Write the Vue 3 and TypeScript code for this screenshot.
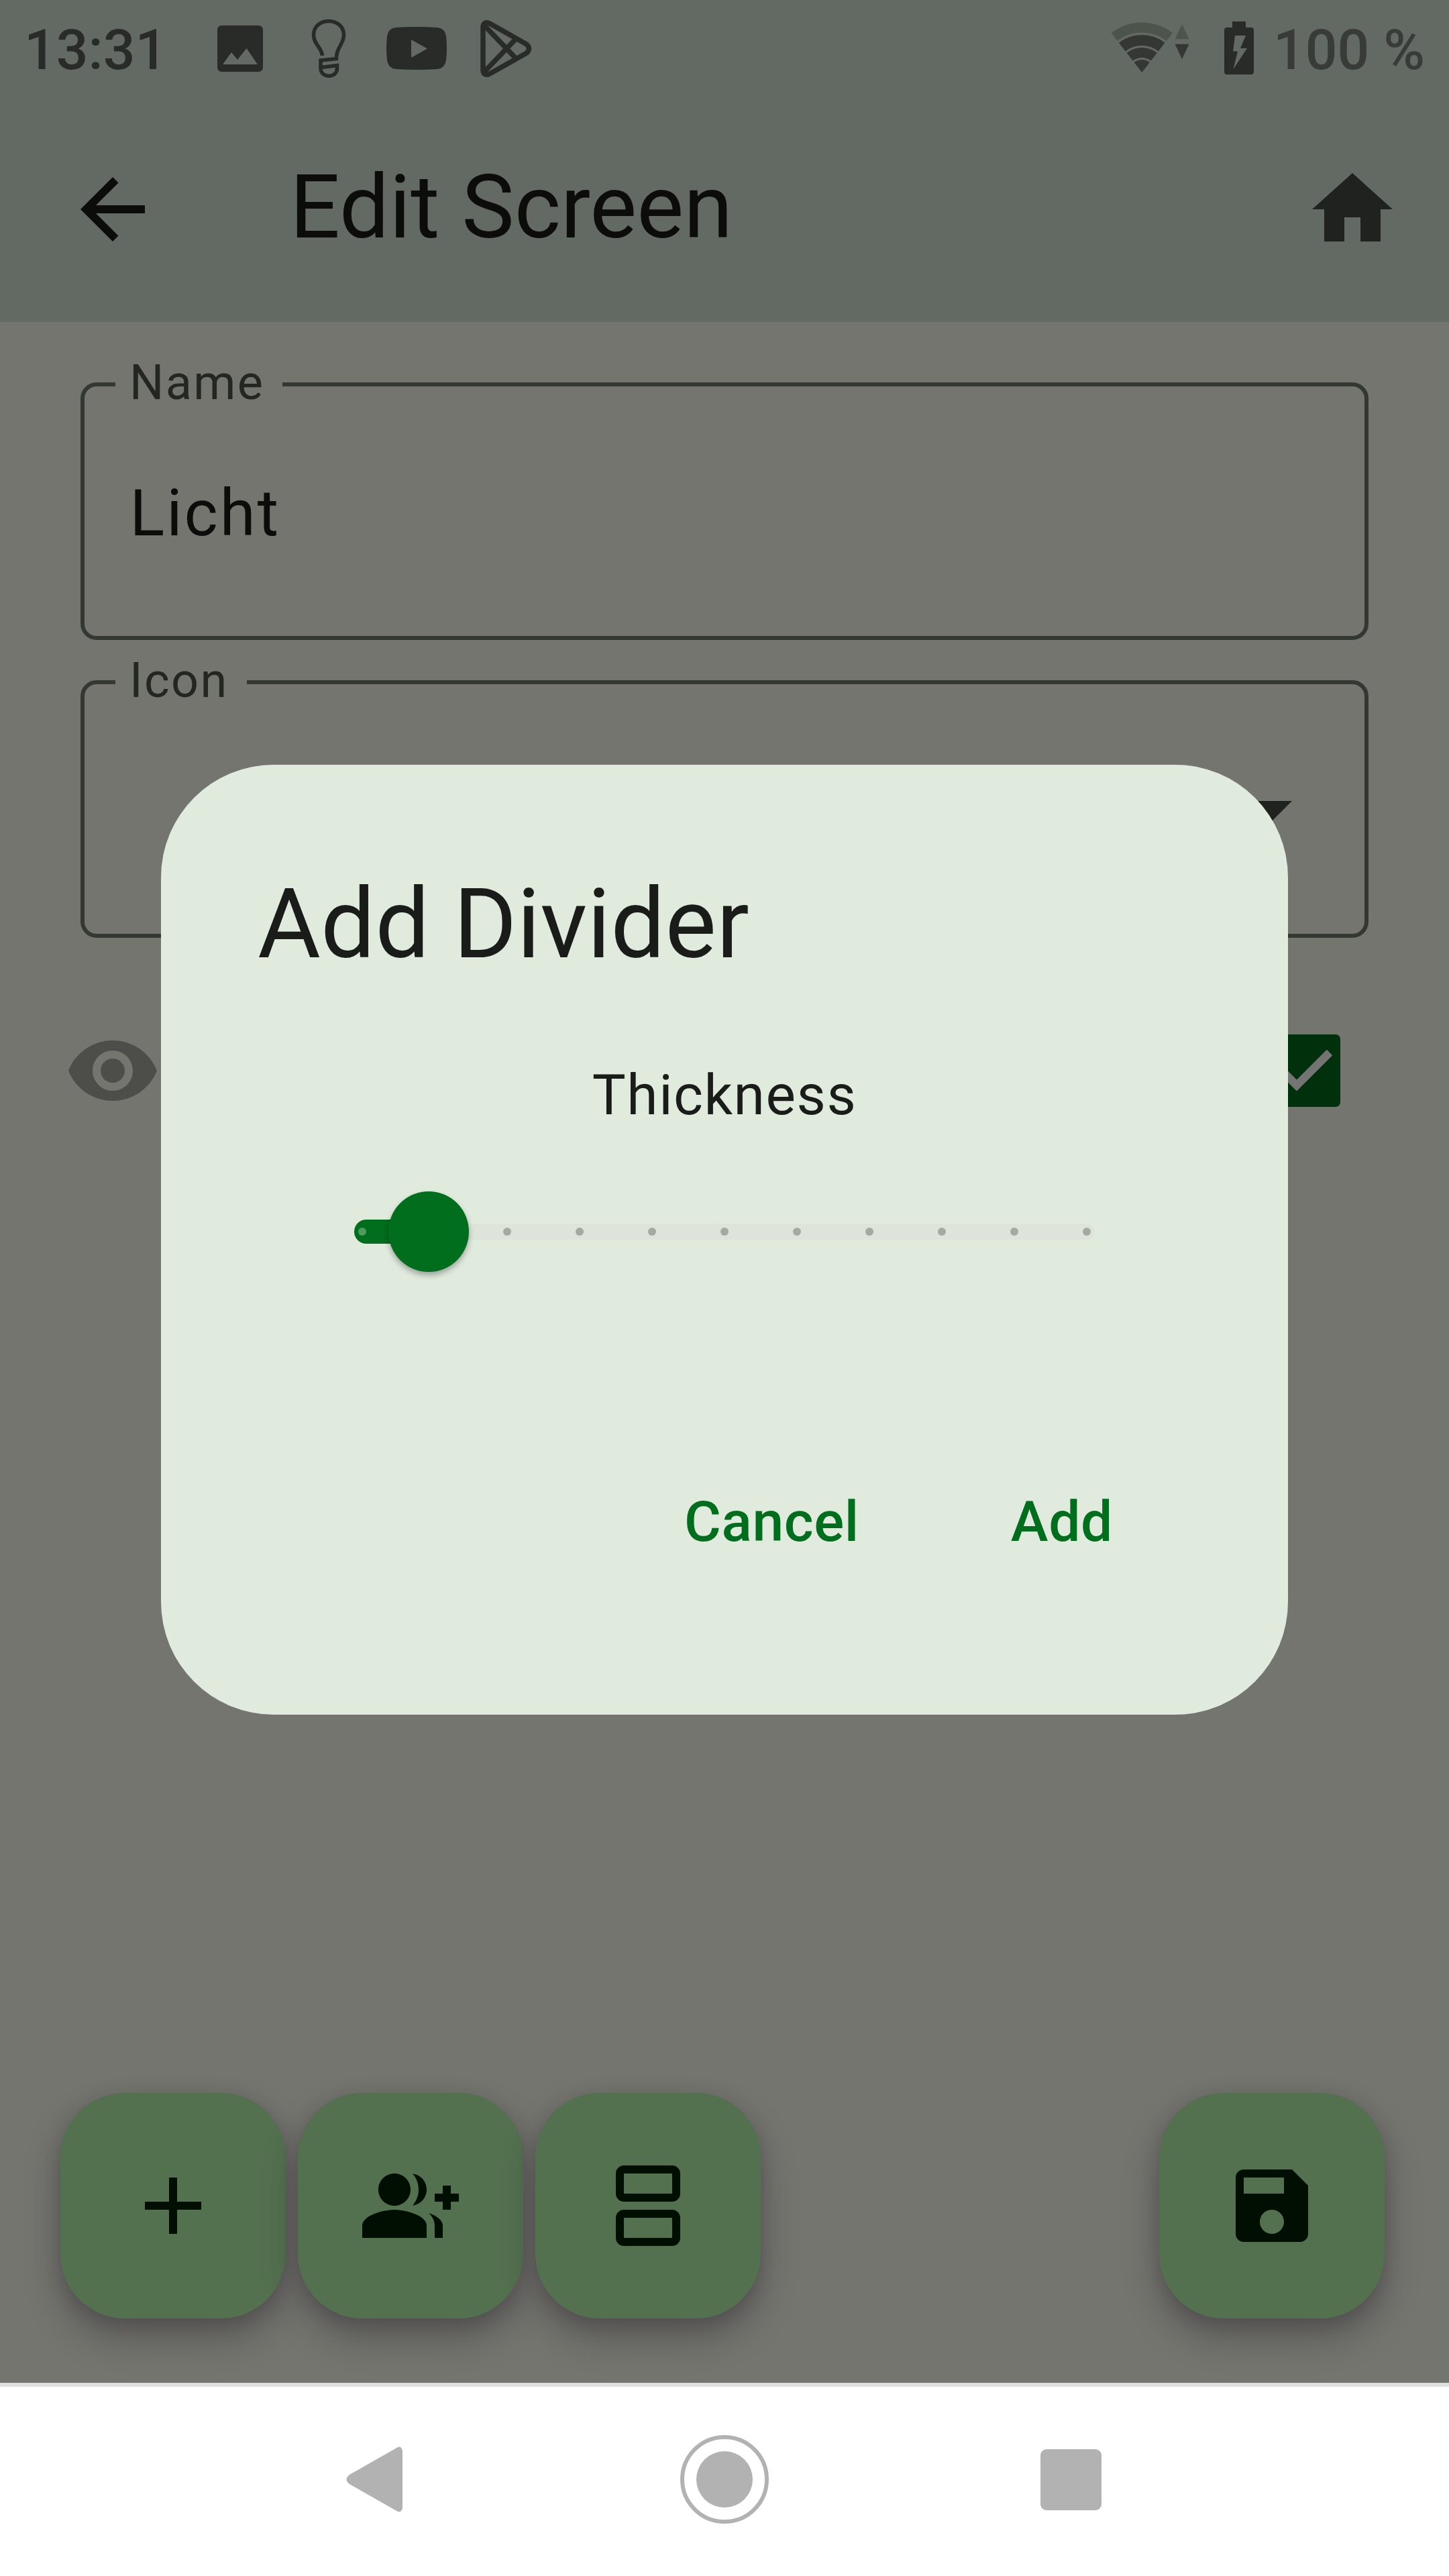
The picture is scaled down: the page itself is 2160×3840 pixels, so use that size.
<script setup lang="ts">
const ticks: number[] = Array.from({ length: 11 }, (_, i) => i).filter((i) => i !== 1)

interface Fab {
  name: string
  path: string
}

const fabs: Fab[] = [
  { name: 'add', path: 'M19 13h-6v6h-2v-6H5v-2h6V5h2v6h6v2z' },
  {
    name: 'group-add',
    path: 'M22 9V7h-2v2h-2v2h2v2h2v-2h2V9zM8 12c2.21 0 4-1.79 4-4s-1.79-4-4-4-4 1.79-4 4 1.79 4 4 4zm0 1c-2.67 0-8 1.34-8 4v3h16v-3c0-2.66-5.33-4-8-4zm4.51-8.95C13.43 5.11 14 6.49 14 8s-.57 2.89-1.49 3.95C14.47 11.7 16 10.04 16 8s-1.53-3.7-3.49-3.95zm4.02 9.78C17.42 14.66 18 15.7 18 17v3h2v-3c0-1.45-1.59-2.51-3.47-3.17z',
  },
  {
    name: 'divider',
    path: 'M18 2H6c-1.1 0-2 .9-2 2v5c0 1.1.9 2 2 2h12c1.1 0 2-.9 2-2V4c0-1.1-.9-2-2-2zm0 7H6V4h12v5zM18 13H6c-1.1 0-2 .9-2 2v5c0 1.1.9 2 2 2h12c1.1 0 2-.9 2-2v-5c0-1.1-.9-2-2-2zm0 7H6v-5h12v5z',
  },
]
const savePath =
  'M17 3H5c-1.11 0-2 .9-2 2v14c0 1.1.89 2 2 2h14c1.1 0 2-.9 2-2V7l-4-4zm-5 16c-1.66 0-3-1.34-3-3s1.34-3 3-3 3 1.34 3 3-1.34 3-3 3zm3-10H5V5h10v4z'
</script>

<template>
  <div class="phone">
    <header class="top">
      <div class="status">
        <span class="clock">13:31</span>
        <svg class="s-image" viewBox="0 0 68 69">
          <path fill-rule="evenodd" d="M7 0H61Q68 0 68 7V62Q68 69 61 69H7Q0 69 0 62V7Q0 0 7 0ZM8 58H60L43.5 34L30 51L21 40Z" />
        </svg>
        <svg class="s-bulb" viewBox="0 0 52 88" fill="none" stroke="#282b28" stroke-width="5.500">
          <path d="M16.500 55C15 42 3.500 38 3.500 24C3.500 11 14 3.500 26 3.500S48.500 11 48.500 24C48.500 38 37 43 37.500 59.500L14 62V74C14 89 38.500 89 38.500 74V69.500L15 72.500" />
        </svg>
        <svg class="s-tube" viewBox="0 0 90 64">
          <path fill-rule="evenodd" d="M14 1Q45-1 76 1Q87 2 89 14Q91 32 89 50Q87 62 76 63Q45 65 14 63Q3 62 1 50Q-1 32 1 14Q3 2 14 1ZM37 19V46L61 32.500Z" />
        </svg>
        <svg class="s-play" viewBox="0 0 77 85" fill="none" stroke="#282b28" stroke-width="7.500" stroke-linejoin="round">
          <path d="M4 10Q5 1 14 5L69 36Q76 42.500 69 49L14 80Q5 84 4 75Z" />
          <path d="M6 8L54 58M6 77L54 27" />
        </svg>
        <span class="grow"></span>
        <svg class="s-wifi" viewBox="0 0 116 76">
          <g fill="none" stroke="#353734">
            <path stroke="#4d544c" stroke-width="15" d="M4.100 22.100A67 67 0 0 1 86.300 22.100" />
            <path stroke-width="16" d="M15.800 37.100A48 48 0 0 1 74.600 37.100" />
            <path stroke-width="15" d="M27.100 51.700A29.500 29.500 0 0 1 63.300 51.700" />
          </g>
          <path fill="#353734" d="M45.200 75L33.600 60A19 19 0 0 1 56.800 60Z" />
          <path fill="#4d544c" d="M94.500 25.300L105 3.300L115.500 25.300Z" />
          <path fill="#353734" d="M94.500 32.700L105 55L115.500 32.700Z" />
        </svg>
        <svg class="s-battery" viewBox="0 0 44 79">
          <path fill-rule="evenodd" d="M12 0H32V9H40Q44 9 44 13V75Q44 79 40 79H4Q0 79 0 75V13Q0 9 4 9H12ZM16 21L13 44.500H20L13.500 71L34 40H24L32 21Z" />
        </svg>
        <span class="percent">100 %</span>
      </div>
      <div class="bar">
        <svg class="icon back" viewBox="0 0 24 24"><path d="M20 11H7.830l5.590-5.590L12 4l-8 8 8 8 1.410-1.410L7.830 13H20v-2z" /></svg>
        <h1>Edit Screen</h1>
        <svg class="icon home" viewBox="0 0 24 24"><path d="M10 20v-6h4v6h5v-8h3L12 3 2 12h3v8z" /></svg>
      </div>
    </header>

    <main class="content">
      <div class="field">
        <label class="field-label">Name</label>
        <span class="value">Licht</span>
      </div>
      <div class="field">
        <label class="field-label">Icon</label>
        <svg class="icon drop" viewBox="0 0 24 24"><path d="M7 10l5 5 5-5z" /></svg>
      </div>
      <div class="visible-row">
        <svg class="icon eye" viewBox="0 0 24 24">
          <path d="M12 4.500C7 4.500 2.730 7.610 1 12c1.730 4.390 6 7.500 11 7.500s9.270-3.110 11-7.500c-1.730-4.390-6-7.500-11-7.500zM12 17c-2.760 0-5-2.240-5-5s2.240-5 5-5 5 2.240 5 5-2.240 5-5 5zm0-8c-1.660 0-3 1.340-3 3s1.340 3 3 3 3-1.340 3-3-1.340-3-3-3z" />
        </svg>
        <svg class="check" viewBox="0 0 108 108">
          <rect width="108" height="108" rx="7" fill="#00300c" />
          <path d="M19 52L43 76L92 27" fill="none" stroke="#747573" stroke-width="12" />
        </svg>
      </div>
    </main>

    <div class="fabs">
      <div v-for="fab in fabs" :key="fab.name" class="fab">
        <svg class="icon" viewBox="0 0 24 24"><path fill-rule="evenodd" :d="fab.path" /></svg>
      </div>
      <div class="fab save">
        <svg class="icon" viewBox="0 0 24 24"><path :d="savePath" /></svg>
      </div>
    </div>

    <nav class="nav">
      <svg class="nav-back" viewBox="0 0 84 98"><path d="M84 6V92Q82 99 77 97L5 56Q-4 49 5 42L77 1Q82-1 84 6Z" /></svg>
      <svg class="nav-home" viewBox="0 0 132 132">
        <circle cx="66" cy="66" r="63" fill="none" stroke="#b2b2b2" stroke-width="6" />
        <circle cx="66" cy="66" r="42" />
      </svg>
      <div class="nav-recent"></div>
    </nav>

    <div class="overlay">
      <section class="dialog">
        <h2>Add Divider</h2>
        <p class="caption">Thickness</p>
        <div class="slider">
          <div class="rail"></div>
          <div class="active"></div>
          <span
            v-for="t in ticks"
            :key="t"
            class="tick"
            :class="{ on: t === 0 }"
            :style="{ left: 6 + t * 108 + 'px' }"
          ></span>
          <div class="thumb"></div>
        </div>
        <div class="actions">
          <span class="action">Cancel</span>
          <span class="action">Add</span>
        </div>
      </section>
    </div>
  </div>
</template>

<style>
body {
  margin: 0;
}
</style>

<style scoped>
.phone {
  position: relative;
  box-sizing: border-box;
  width: 2160px;
  height: 3840px;
  overflow: hidden;
  display: flex;
  flex-direction: column;
  background: #74756f;
  font-family: Roboto, sans-serif;
}
svg {
  display: block;
  flex: none;
}
.icon {
  width: 144px;
  height: 144px;
}
.top {
  flex: none;
  height: 480px;
  background: #636a63;
}
.status {
  display: flex;
  height: 150px;
  padding: 0 36px 0 36px;
  font-size: 84px;
  line-height: 150px;
  font-weight: 500;
  color: #282b28;
  fill: #282b28;
}
.clock {
  width: 287.500px;
}
.s-image {
  width: 68px;
  height: 69px;
  margin-top: 38px;
}
.s-bulb {
  width: 52px;
  height: 88px;
  margin: 28px 0 0 72.500px;
}
.s-tube {
  width: 90px;
  height: 64px;
  margin: 40px 0 0 60px;
}
.s-play {
  width: 77px;
  height: 85px;
  margin: 29.500px 0 0 49.500px;
}
.grow {
  flex: 1;
}
.s-wifi {
  width: 116px;
  height: 76px;
  margin: 33px 52px 0 0;
}
.s-battery {
  width: 44px;
  height: 79px;
  margin: 31.500px 29px 0 0;
}
.percent {
  color: #393b38;
  white-space: nowrap;
}
.bar {
  display: flex;
  align-items: center;
  height: 324px;
  padding: 0 72px 0 96px;
}
.back {
  fill: #0c0c0b;
}
h1 {
  flex: 1;
  margin: 0;
  padding: 0 0 6px 192px;
  font-size: 132px;
  line-height: 168px;
  font-weight: 400;
  color: #0c0c0b;
}
.home {
  fill: #20221f;
}
.content {
  flex: 1;
  display: flex;
  flex-direction: column;
  gap: 60px;
  padding: 90px 120px 0;
}
.field {
  position: relative;
  box-sizing: border-box;
  flex: none;
  display: flex;
  align-items: center;
  height: 384px;
  padding: 0 66px;
  border: 6px solid #343833;
  border-radius: 24px;
}
.field-label {
  position: absolute;
  left: 45.500px;
  top: -47px;
  padding: 0 27px 0 21.500px;
  font-size: 72px;
  line-height: 84px;
  letter-spacing: 2.400px;
  color: #242622;
  background: #74756f;
}
.value {
  padding: 5px 0 0 1.500px;
  font-size: 96px;
  line-height: 144px;
  letter-spacing: 3px;
  color: #0c0c0b;
}
.drop {
  margin-left: auto;
  fill: #20221f;
}
.visible-row {
  display: flex;
  align-items: center;
  justify-content: space-between;
  height: 144px;
  margin: 66px 42px 0 -24px;
}
.eye {
  fill: #4d4d4a;
}
.check {
  width: 108px;
  height: 108px;
}
.fabs {
  flex: none;
  display: flex;
  gap: 18px;
  padding: 0 96px 96px 90px;
}
.fab {
  display: flex;
  align-items: center;
  justify-content: center;
  width: 336px;
  height: 336px;
  border-radius: 96px;
  background: #53704f;
  fill: #000f02;
  box-shadow: 0 28px 50px rgba(40, 34, 40, 0.38), 0 4px 22px rgba(80, 70, 80, 0.32);
}
.save {
  margin-left: auto;
}
.nav {
  position: relative;
  box-sizing: border-box;
  flex: none;
  display: flex;
  align-items: center;
  height: 288px;
  padding-left: 516px;
  border-top: 6px solid #e0e0e0;
  padding-bottom: 6px;
  background: #fff;
  fill: #b2b2b2;
}
.nav-back {
  width: 84px;
  height: 98px;
}
.nav-home {
  width: 132px;
  height: 132px;
  margin-left: 414px;
}
.nav-recent {
  width: 91px;
  height: 91px;
  margin-left: 404.500px;
  border-radius: 9px;
  background: #b2b2b2;
}
.overlay {
  position: absolute;
  inset: 0 0 144px;
  display: flex;
  align-items: center;
  justify-content: center;
}
.dialog {
  box-sizing: border-box;
  width: 1680px;
  height: 1416px;
  padding: 142px 144px 0;
  border-radius: 168px;
  background: #e0ebde;
  color: #1a1c19;
}
h2 {
  margin: 0;
  font-size: 144px;
  line-height: 192px;
  font-weight: 400;
}
.caption {
  margin: 99px 0 0;
  font-size: 84px;
  line-height: 120px;
  letter-spacing: 1.500px;
  text-align: center;
}
.slider {
  position: relative;
  width: 1104px;
  height: 120px;
  margin: 83px auto 0;
}
.rail,
.active,
.tick,
.thumb {
  position: absolute;
}
.rail {
  left: 0;
  top: 48px;
  width: 1104px;
  height: 24px;
  border-radius: 12px;
  background: #dee4d9;
}
.active {
  left: 0;
  top: 42px;
  width: 110px;
  height: 36px;
  border-radius: 18px;
  background: #006e1c;
}
.tick {
  top: 54px;
  width: 12px;
  height: 12px;
  border-radius: 50%;
  background: #a3aba0;
}
.tick.on {
  background: #4f9b5e;
}
.thumb {
  left: 51px;
  top: 0;
  width: 120px;
  height: 120px;
  border-radius: 50%;
  background: #006e1c;
  box-shadow: 0 5px 9px rgba(0, 0, 0, 0.3);
}
.actions {
  display: flex;
  justify-content: flex-end;
  gap: 226px;
  margin: 253px 117px 0 0;
}
.action {
  font-size: 84px;
  line-height: 240px;
  font-weight: 500;
  letter-spacing: 0.600px;
  color: #006e1c;
}
</style>
